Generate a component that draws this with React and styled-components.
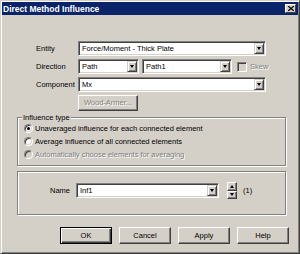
import React from "react";
import styled, { createGlobalStyle } from "styled-components";

const GlobalStyle = createGlobalStyle`
  html, body {
    margin: 0;
    padding: 0;
    background: #d4d0c8;
  }
  body {
    font-family: "Liberation Sans", Arial, sans-serif;
    font-size: 7.5px;
    color: #000;
  }
`;

const Window = styled.div`
  width: 300px;
  height: 254px;
  box-sizing: border-box;
  background: #d4d0c8;
  border: 1px solid;
  border-color: #d4d0c8 #404040 #404040 #d4d0c8;
  box-shadow: inset 1px 1px 0 #fff, inset -1px -1px 0 #808080;
  padding: 1px;
  display: flex;
  flex-direction: column;
`;

const TitleBar = styled.div`
  height: 13px;
  background: #0a246a;
  display: flex;
  align-items: center;
  justify-content: space-between;
  padding: 0 2px 0 1px;
  color: #fff;
  font-weight: bold;
  font-size: 8.5px;
  white-space: nowrap;
`;

const CloseButton = styled.div`
  width: 11px;
  height: 9px;
  box-sizing: border-box;
  background: #d4d0c8;
  border: 1px solid;
  border-color: #fff #404040 #404040 #fff;
  display: flex;
  align-items: center;
  justify-content: center;
`;

const FieldRow = styled.div`
  display: flex;
  align-items: center;
  height: 15px;
  margin-left: 34px;
  margin-top: ${(p) => p.$top || 3}px;
`;

const Label = styled.div`
  width: ${(p) => p.$width || 42}px;
  flex: none;
  white-space: nowrap;
`;

const Combo = styled.div`
  width: ${(p) => p.$width}px;
  height: ${(p) => p.$height || 15}px;
  margin-left: ${(p) => p.$gap || 0}px;
  flex: none;
  box-sizing: border-box;
  background: #fff;
  border: 1px solid;
  border-color: #808080 #fff #fff #808080;
  box-shadow: inset 1px 1px 0 #404040, inset -1px -1px 0 #d4d0c8;
  padding: 1px;
  display: flex;
  align-items: stretch;
`;

const ComboText = styled.div`
  flex: 1;
  padding-left: 2px;
  display: flex;
  align-items: center;
  white-space: nowrap;
  overflow: hidden;
`;

const DropButton = styled.div`
  width: 10px;
  flex: none;
  box-sizing: border-box;
  background: #d4d0c8;
  border: 1px solid;
  border-color: #d4d0c8 #404040 #404040 #d4d0c8;
  box-shadow: inset 1px 1px 0 #fff, inset -1px -1px 0 #808080;
  display: flex;
  align-items: center;
  justify-content: center;
`;

const Arrow = styled.span`
  width: 0;
  height: 0;
  border-left: 2.5px solid transparent;
  border-right: 2.5px solid transparent;
  ${(p) =>
    p.$up
      ? "border-bottom: 3px solid #000;"
      : "border-top: 3px solid #000;"}
`;

const CheckBox = styled.span`
  width: 10px;
  height: 10px;
  margin-left: 5px;
  box-sizing: border-box;
  background: #d4d0c8;
  border: 1px solid;
  border-color: #808080 #fff #fff #808080;
  box-shadow: inset 1px 1px 0 #404040, inset -1px -1px 0 #d4d0c8;
  flex: none;
`;

const DisabledText = styled.span`
  color: #808080;
  text-shadow: 1px 1px 0 #fff;
  margin-left: ${(p) => p.$gap || 0}px;
  white-space: nowrap;
`;

const PushButton = styled.div`
  width: ${(p) => p.$width || 52}px;
  height: ${(p) => p.$height || 17}px;
  flex: none;
  box-sizing: border-box;
  background: #d4d0c8;
  border: 1px solid;
  border-color: ${(p) =>
    p.$default ? "#000" : "#fff #404040 #404040 #fff"};
  box-shadow: ${(p) =>
    p.$default
      ? "inset 1px 1px 0 #fff, inset -1px -1px 0 #404040, inset -2px -2px 0 #808080"
      : "inset -1px -1px 0 #808080"};
  display: flex;
  align-items: center;
  justify-content: center;
  color: ${(p) => (p.$disabled ? "#808080" : "#000")};
  text-shadow: ${(p) => (p.$disabled ? "1px 1px 0 #fff" : "none")};
  white-space: nowrap;
`;

const ButtonRow = styled.div`
  display: flex;
  gap: 7px;
  margin-left: 58px;
  margin-top: 12px;
`;

const GroupBox = styled.div`
  width: 269px;
  height: ${(p) => p.$height}px;
  margin-left: 15px;
  margin-top: ${(p) => p.$top}px;
  box-sizing: border-box;
  border: 1px solid #808080;
  box-shadow: inset 1px 1px 0 #fff, 1px 1px 0 #fff;
  display: flex;
  flex-direction: column;
`;

const Legend = styled.div`
  align-self: flex-start;
  margin: -5px 0 0 4px;
  padding: 0 1px;
  line-height: 9px;
  height: 9px;
  background: #d4d0c8;
  white-space: nowrap;
`;

const RadioRow = styled.div`
  display: flex;
  align-items: center;
  height: 13px;
  margin-left: 6px;
  white-space: nowrap;
  color: ${(p) => (p.$disabled ? "#808080" : "#000")};
  text-shadow: ${(p) => (p.$disabled ? "1px 1px 0 #fff" : "none")};
`;

const Radio = styled.span`
  width: 9px;
  height: 9px;
  margin-right: 2px;
  flex: none;
  box-sizing: border-box;
  border-radius: 50%;
  background: ${(p) => (p.$disabled ? "#d4d0c8" : "#fff")};
  border: 1px solid;
  border-color: #808080 #fff #fff #808080;
  box-shadow: inset 1px 1px 0 #404040, inset -1px -1px 0 #d4d0c8;
  display: flex;
  align-items: center;
  justify-content: center;
  &::after {
    content: "";
    width: 3px;
    height: 3px;
    border-radius: 50%;
    background: ${(p) => (p.$checked ? "#000" : "transparent")};
  }
`;

const NameRow = styled.div`
  display: flex;
  align-items: center;
  margin: 10px 0 0 32px;
`;

const Spinner = styled.div`
  display: flex;
  flex-direction: column;
  margin-left: 8px;
`;

const SpinHalf = styled.div`
  width: 10px;
  height: 8.5px;
  box-sizing: border-box;
  background: #d4d0c8;
  border: 1px solid;
  border-color: #fff #404040 #404040 #fff;
  box-shadow: inset -1px -1px 0 #808080;
  display: flex;
  align-items: center;
  justify-content: center;
`;

const Count = styled.span`
  margin-left: 6px;
`;

const ComboBox = ({ width, gap, height, children }) => (
  <Combo $width={width} $gap={gap} $height={height}>
    <ComboText>{children}</ComboText>
    <DropButton>
      <Arrow />
    </DropButton>
  </Combo>
);

const radios = [
  { text: "Unaveraged influence for each connected element", checked: true },
  { text: "Average influence of all connected elements" },
  { text: "Automatically choose elements for averaging", disabled: true },
];

export default function App() {
  return (
    <Window>
      <GlobalStyle />
      <TitleBar>
        <span>Direct Method Influence</span>
        <CloseButton>
          <svg width="6" height="5" viewBox="0 0 6 5">
            <path d="M0 0L6 5M6 0L0 5" stroke="#000" strokeWidth="1.3" />
          </svg>
        </CloseButton>
      </TitleBar>

      <FieldRow $top={26}>
        <Label>Entity</Label>
        <ComboBox width={188}>Force/Moment - Thick Plate</ComboBox>
      </FieldRow>
      <FieldRow>
        <Label>Direction</Label>
        <ComboBox width={61}>Path</ComboBox>
        <ComboBox width={90} gap={3}>
          Path1
        </ComboBox>
        <CheckBox />
        <DisabledText $gap={3}>Skew</DisabledText>
      </FieldRow>
      <FieldRow>
        <Label>Component</Label>
        <ComboBox width={188}>Mx</ComboBox>
      </FieldRow>
      <FieldRow $top={3}>
        <Label />
        <PushButton $width={60} $height={16} $disabled>
          Wood-Armer...
        </PushButton>
      </FieldRow>

      <GroupBox $top={7} $height={49}>
        <Legend>Influence type</Legend>
        {radios.map((r) => (
          <RadioRow key={r.text} $disabled={r.disabled}>
            <Radio $checked={r.checked} $disabled={r.disabled} />
            {r.text}
          </RadioRow>
        ))}
      </GroupBox>

      <GroupBox $top={5} $height={44}>
        <NameRow>
          <Label $width={26}>Name</Label>
          <ComboBox width={143}>Inf1</ComboBox>
          <Spinner>
            <SpinHalf>
              <Arrow $up />
            </SpinHalf>
            <SpinHalf>
              <Arrow />
            </SpinHalf>
          </Spinner>
          <Count>(1)</Count>
        </NameRow>
      </GroupBox>

      <ButtonRow>
        <PushButton $default>OK</PushButton>
        <PushButton>Cancel</PushButton>
        <PushButton>Apply</PushButton>
        <PushButton>Help</PushButton>
      </ButtonRow>
    </Window>
  );
}
